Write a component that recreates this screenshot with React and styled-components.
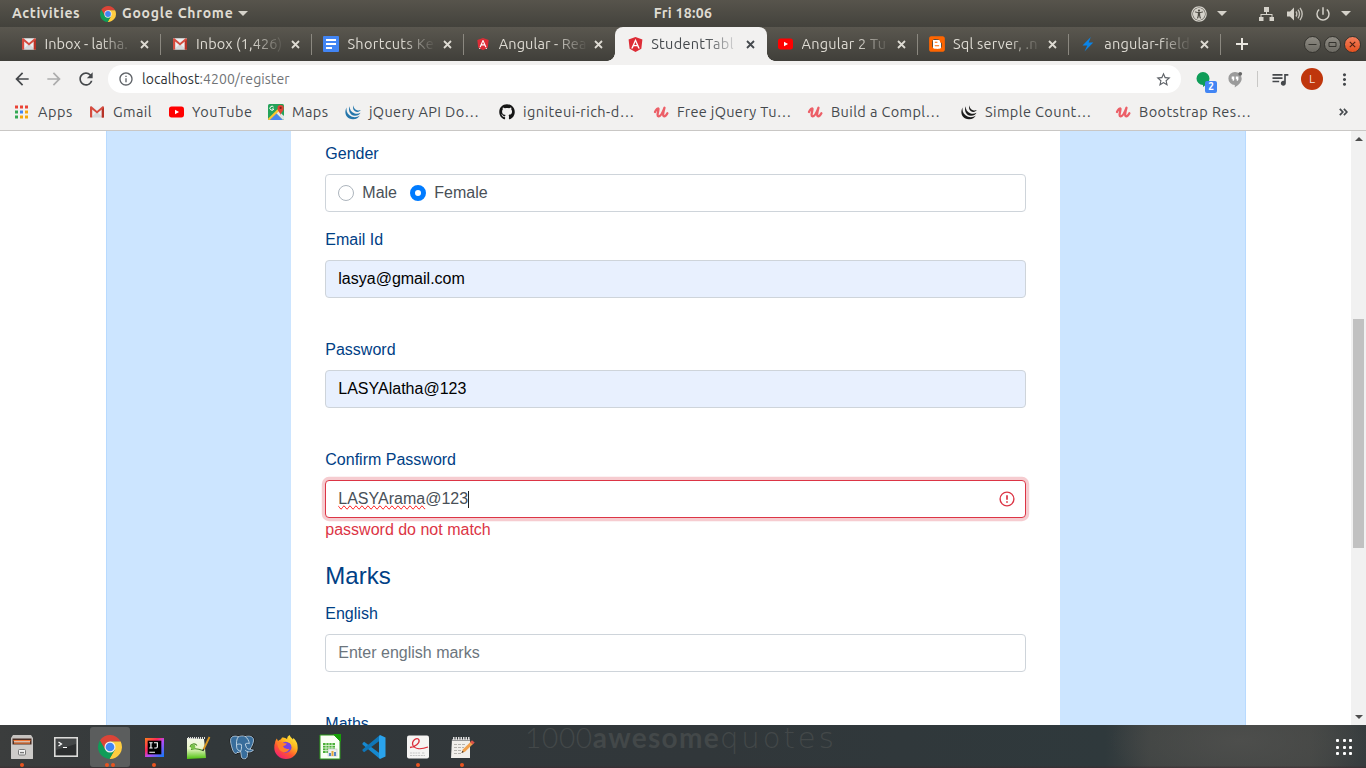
import React from "react";
import styled, { createGlobalStyle, css } from "styled-components";
import { FaAngular, FaBlogger, FaGithub, FaUniversalAccess } from "react-icons/fa";
import {
  MdArrowBack,
  MdArrowForward,
  MdInfoOutline,
  MdMoreVert,
  MdPowerSettingsNew,
  MdQueueMusic,
  MdRefresh,
  MdStarBorder,
} from "react-icons/md";

const uiFont = `"Ubuntu", "Noto Sans", sans-serif`;

const GlobalStyle = createGlobalStyle`
  *, *::before, *::after { box-sizing: border-box; }
  body { margin: 0; overflow: hidden; font-family: "Liberation Sans", Arial, sans-serif; }
  svg { display: block; flex: none; }
`;

const Desktop = styled.div`
  width: 1366px;
  height: 768px;
  display: flex;
  flex-direction: column;
  overflow: hidden;
  background: #fff;
`;

/* ---------- system bar ---------- */

const SystemBar = styled.header`
  flex: none;
  height: 27px;
  display: grid;
  grid-template-columns: 1fr auto 1fr;
  align-items: center;
  background: linear-gradient(#57544c, #43423c);
  color: #dfdbd2;
  font: 700 14px/27px ${uiFont};
`;

const SystemLeft = styled.div`
  display: flex;
  align-items: center;
  padding-left: 12px;
`;

const BarText = styled.span`
  white-space: nowrap;
  width: ${(p) => p.$width}px;
  letter-spacing: ${(p) => p.$track || 0}px;
  margin-right: ${(p) => p.$after || 0}px;
`;

const Clock = styled.span`
  white-space: nowrap;
  letter-spacing: 0.3px;
`;

const SystemRight = styled.div`
  display: flex;
  align-items: center;
  justify-content: flex-end;
  padding-right: 15px;
`;

const TrayItem = styled.span`
  display: flex;
  margin-left: ${(p) => p.$before}px;
`;

const Caret = styled.i`
  border: 5px solid transparent;
  border-top-color: #d5d2ca;
  border-bottom: 0;
  margin-left: ${(p) => p.$before || 0}px;
`;

/* ---------- tab strip ---------- */

const TabStrip = styled.nav`
  flex: none;
  height: 34px;
  display: flex;
  padding-left: 9.6px;
  background: linear-gradient(#5a574f, #403f3a);
`;

const TabBox = styled.div`
  position: relative;
  width: 151.4px;
  height: 34px;
  display: flex;
  align-items: center;
  padding-left: 11px;
  color: #dedbd3;
  font: 400 14.5px/34px ${uiFont};

  ${(p) =>
    p.$divider &&
    css`
      &::after {
        content: "";
        position: absolute;
        right: 0;
        top: 7px;
        width: 1px;
        height: 21px;
        background: #8b8880;
      }
    `}

  ${(p) =>
    p.$active &&
    css`
      padding-left: 12px;
      color: #45494d;
      background: #f2f1f0;
      border-radius: 8px 8px 0 0;
      &::before,
      &::after {
        content: "";
        position: absolute;
        bottom: 0;
        width: 8px;
        height: 8px;
      }
      &::before {
        left: -8px;
        background: radial-gradient(circle at 0 0, transparent 7.5px, #f2f1f0 8px);
      }
      &::after {
        right: -8px;
        background: radial-gradient(circle at 100% 0, transparent 7.5px, #f2f1f0 8px);
      }
    `}
`;

const TabTitle = styled.span`
  width: 87.3px;
  margin: 0 8px 0 8px;
  white-space: nowrap;
  letter-spacing: ${(p) => p.$track || 0}px;
  mask-image: linear-gradient(90deg, #000 55px, transparent 89px);
`;

const IconSlot = styled.span`
  width: 16px;
  height: 16px;
  flex: none;
  display: flex;
  align-items: center;
  justify-content: center;
`;

const Backed = styled.span`
  display: flex;
  background: linear-gradient(#fff, #fff) center / 8px 9px no-repeat;
`;

const NewTab = styled.div`
  width: 43px;
  display: flex;
  align-items: center;
  justify-content: center;
`;

const WindowButtons = styled.div`
  display: flex;
  align-items: center;
  gap: 3px;
  margin-left: 40.5px;
`;

const WindowButton = styled.span`
  width: 17px;
  height: 17px;
  border-radius: 50%;
  border: 1px solid #35342f;
  display: flex;
  align-items: center;
  justify-content: center;
  background: ${(p) =>
    p.$close ? "linear-gradient(#f37f5c, #e4511f)" : "linear-gradient(#8e8b83, #6d6b64)"};
`;

/* ---------- toolbar ---------- */

const Toolbar = styled.div`
  flex: none;
  height: 36px;
  display: flex;
  align-items: center;
  padding-left: 12px;
  background: #f2f1f0;
  color: #45484b;
`;

const NavButton = styled.span`
  display: flex;
  width: 32px;
  color: ${(p) => (p.$off ? "#adadad" : "#45484b")};
`;

const Omnibox = styled.div`
  width: 1073px;
  height: 28px;
  border-radius: 14px;
  background: #fff;
  display: flex;
  align-items: center;
  padding: 0 9.5px 0 10px;
  color: #5f6368;
  font: 400 14px/28px ${uiFont};
`;

const Address = styled.span`
  flex: 1;
  margin-left: 8px;
  letter-spacing: 0.06px;
  color: #707376;
  b {
    font-weight: 400;
    color: #2e3134;
  }
`;

const Extension = styled.span`
  position: relative;
  display: flex;
  margin-left: ${(p) => p.$before}px;
`;

const CountBadge = styled.span`
  position: absolute;
  left: 10px;
  top: 11px;
  width: 12px;
  height: 12px;
  border-radius: 2px;
  background: #4285f4;
  color: #fff;
  font: 700 10px/12px ${uiFont};
  text-align: center;
`;

const ToolbarRule = styled.i`
  width: 1px;
  height: 16px;
  margin-left: 14px;
  background: #c9c8c6;
`;

const Avatar = styled.span`
  width: 22px;
  height: 22px;
  margin-left: 11px;
  border-radius: 50%;
  background: #bf360c;
  color: #f3ded7;
  font: 400 12px/22px ${uiFont};
  text-align: center;
`;

/* ---------- bookmarks ---------- */

const BookmarkBar = styled.div`
  flex: none;
  height: 34px;
  display: flex;
  padding: 0 0 4px 14px;
  background: #f2f1f0;
  border-bottom: 1px solid #c9c7c5;
  color: #45494d;
  font: 400 14.5px/29px ${uiFont};
`;

const BookmarkItem = styled.span`
  display: flex;
  align-items: center;
  margin-right: 16px;
`;

const BookmarkLabel = styled.span`
  width: ${(p) => p.$width}px;
  margin-left: 8px;
  white-space: nowrap;
  letter-spacing: ${(p) => p.$track || 0}px;
`;

const OverflowMark = styled.span`
  display: flex;
  align-items: center;
  margin-left: 70px;
`;

/* ---------- page ---------- */

const Viewport = styled.main`
  flex: 1;
  min-height: 0;
  display: flex;
  overflow: hidden;
`;

const Page = styled.div`
  width: 1351px;
  padding-left: 105.5px;
  overflow: hidden;
`;

const Panel = styled.div`
  width: 1140px;
  padding: 0 184.3px;
  background: #cce5ff;
  border: solid #b8daff;
  border-width: 0 1px;
`;

const Form = styled.form`
  width: 769.4px;
  padding: 11px 34.5px 0;
  background: #fff;
  color: #004085;
  font-size: 16px;
  line-height: 24px;
`;

const Group = styled.div`
  height: ${(p) => p.$height}px;
`;

const Label = styled.label`
  display: block;
  margin-bottom: 8px;
`;

const Field = styled.div`
  height: 38px;
  display: flex;
  align-items: center;
  padding: 0 10px 0 12px;
  border: 1px solid #ced4da;
  border-radius: 4px;
  background: ${(p) => (p.$filled ? "#e8f0fe" : "#fff")};
  color: ${(p) => (p.$filled ? "#000" : "#495057")};
  ${(p) =>
    p.$invalid &&
    css`
      justify-content: space-between;
      border-color: #dc3545;
      box-shadow: 0 0 0 3.2px rgba(220, 53, 69, 0.25);
    `}
`;

const Placeholder = styled.span`
  color: #6c757d;
`;

const Typed = styled.span`
  display: flex;
  align-items: center;
`;

const Misspelled = styled.span`
  text-decoration-line: spelling-error;
`;

const TextCursor = styled.i`
  width: 1px;
  height: 17px;
  background: #222;
`;

const Radio = styled.span`
  width: 16px;
  height: 16px;
  margin-right: 8px;
  border-radius: 50%;
  background: #fff;
  border: ${(p) => (p.$on ? "5px solid #007bff" : "1px solid #adb5bd")};
`;

const RadioText = styled.span`
  width: 48px;
`;

const ErrorText = styled.div`
  color: #dc3545;
`;

const Heading = styled.h4`
  margin: 0 0 12px;
  font-size: 24px;
  font-weight: 400;
  line-height: 28px;
`;

const ScrollTrack = styled.div`
  width: 15px;
  display: flex;
  flex-direction: column;
  align-items: center;
  justify-content: space-between;
  padding: 6px 0 6px;
  background: #f1f1f1;
`;

const ScrollArrow = styled.i`
  border: 4px solid transparent;
  ${(p) =>
    p.$up
      ? "border-bottom-color: #4d4d4d; border-top: 0;"
      : "border-top-color: #4d4d4d; border-bottom: 0;"}
`;

const ScrollThumb = styled.i`
  width: 11px;
  height: 229px;
  margin-bottom: -10px;
  background: #c1c1c1;
`;

/* ---------- dock ---------- */

const Dock = styled.footer`
  flex: none;
  height: 43px;
  display: flex;
  align-items: flex-start;
  background:
    linear-gradient(transparent 41px, rgba(60, 40, 45, 0.45) 42px),
    radial-gradient(ellipse 130px 50px at 1240px 16px, #4d4e4c 0%, rgba(77, 78, 76, 0) 100%),
    linear-gradient(90deg, #3b3d3d 0, #32383a 180px, #31373a 700px, #2f393c 1105px, #404443 1150px, #444644 1310px, #363c3e 1366px);
`;

const DockItem = styled.span`
  position: relative;
  width: 40px;
  height: 40px;
  margin: 2px 2px 0;
  display: flex;
  align-items: center;
  justify-content: center;
  border-radius: 3px;
  background: ${(p) => (p.$active ? "#5b5d5d" : "transparent")};
`;

const RunningDots = styled.span`
  position: absolute;
  bottom: 0;
  left: 0;
  width: 40px;
  display: flex;
  justify-content: center;
  gap: 1.5px;
  i {
    width: 4px;
    height: 4px;
    border-radius: 50%;
    background: #e95420;
  }
`;

const WallpaperText = styled.span`
  flex: 1;
  height: 40px;
  margin-left: 41px;
  color: #434849;
  font: 300 28px/25px Lato, sans-serif;
  letter-spacing: 0.7px;
  white-space: nowrap;
  b {
    font-weight: 700;
    letter-spacing: 1.3px;
  }
`;

const WideWord = styled.span`
  font: 200 29px/25px "DejaVu Sans", sans-serif;
  letter-spacing: 3px;
`;

const DockRow = styled.div`
  display: flex;
`;

const LauncherGrid = styled.span`
  display: grid;
  grid-template-columns: repeat(3, 3px);
  gap: 3.5px;
  margin: 14px 14px 0 0;
  i {
    width: 3px;
    height: 3px;
    border-radius: 1px;
    background: #fff;
  }
`;

/* ---------- drawings ---------- */

const ChromeIcon = ({ size }) => (
  <svg width={size} height={size} viewBox="0 0 48 48">
    <path fill="#db4437" d="M3.81 11.03A24 24 0 0 1 45.33 13H24L14.47 29.5Z" />
    <path fill="#ffcd40" d="M45.33 13A24 24 0 0 1 22.86 47.97L33.53 29.5L24 13Z" />
    <path fill="#0f9d58" d="M3.81 11.03A24 24 0 0 0 22.86 47.97L33.53 29.5H14.47Z" />
    <circle cx="24" cy="24" r="11" fill="#f1f1f1" />
    <circle cx="24" cy="24" r="8.7" fill="#4285f4" />
  </svg>
);

const VolumeIcon = () => (
  <svg width="18" height="16" viewBox="0 0 18 16">
    <path d="M1 5.500h3L8 1.500v13L4 10.500H1Z" fill="#d5d2ca" />
    <path d="M10 5.500q1.600 2.500 0 5M12 3.700q3 4.300 0 8.600M14 1.900q4.400 6.100 0 12.200" fill="none" stroke="#c2bfb7" strokeWidth="1.400" />
  </svg>
);

const GmailIcon = () => (
  <svg width="16" height="16" viewBox="0 0 16 16">
    <rect x="1" y="2.2" width="14" height="11.4" rx="1" fill="#eceff1" />
    <path d="M3 12.5L8 8l5 4.5v1H3Z" fill="#d5d9db" />
    <path d="M1 3.2v9.5q0 .9.9.9h1.3V5.5L8 9.6l4.8-4.1v8.1h1.3q.9 0 .9-.9V3.2Q15 2 13.5 2.3L8 7 2.5 2.3Q1 2 1 3.2Z" fill="#d54c3f" />
    <path d="M12.8 5.5 15 3.6v9.1q0 .9-.9.9h-1.3Z" fill="#b63327" />
  </svg>
);

const DocsIcon = () => (
  <svg width="16" height="16" viewBox="0 0 16 16">
    <rect width="16" height="16" rx="1" fill="#4285f4" />
    <path d="M3 4h10M3 8h10M3 12h6" stroke="#fff" strokeWidth="1.8" />
  </svg>
);

const AngularIcon = ({ size }) => (
  <Backed>
    <FaAngular size={size} color="#dd2c36" />
  </Backed>
);

const YoutubeIcon = () => (
  <svg width="15" height="12" viewBox="0 0 15 12">
    <rect y=".6" width="15" height="10.8" rx="2.6" fill="#f00" />
    <path d="m6 3.8 4 2.2-4 2.2Z" fill="#fff" />
  </svg>
);

const BloggerIcon = () => (
  <Backed>
    <FaBlogger size={18} color="#ff6500" />
  </Backed>
);

const BoltIcon = () => (
  <svg width="16" height="16" viewBox="0 0 16 16">
    <path d="M10.8 1 2.5 9.6h4.8L4.5 15.5 13.3 6.6H8.7Z" fill="#0a84e8" />
  </svg>
);

const AppsIcon = () => (
  <svg width="16" height="16" viewBox="0 0 16 16">
    {["#ea4335", "#ea4335", "#ea4335", "#34a853", "#4285f4", "#f6a80c", "#34a853", "#f6a80c", "#f6a80c"].map((c, i) => (
      <rect key={i} x={1 + (i % 3) * 5} y={1.5 + Math.floor(i / 3) * 5} width="3" height="3" fill={c} />
    ))}
  </svg>
);

const MapsIcon = () => (
  <svg width="16" height="16" viewBox="0 0 16 16">
    <rect width="16" height="16" rx="1.5" fill="#25a35a" />
    <path d="M1 16 8 9l7 7Z" fill="#4a86ee" />
    <path d="m8 9 2.2-2.2L16 12v3l-1 1Z" fill="#e6e6e6" />
    <path d="M0 14.8 9.5 5.2 11 7l-9.2 9H1Q0 16 0 14.8Z" fill="#fbc62f" />
    <path d="M5.6 3.1A2 2 0 1 0 5.8 5H4" fill="none" stroke="#fff" strokeWidth="1" />
    <path d="M12.5 11.5c0-3-3-4-3-7.5a3 3 0 0 1 6.2 0c0 3.5-3.2 4.5-3.2 7.5Z" fill="#e24436" />
    <circle cx="12.6" cy="3.9" r="1.1" fill="#7d2018" />
  </svg>
);

const JqueryIcon = ({ color }) => (
  <svg width="16" height="16" viewBox="0 0 16 16" fill={color}>
    <path d="M1.6 3.4C-.8 7.5-.2 15 8 15.2c3.4 0 5.600-1.600 6.800-3.700-2 1.500-5 2.200-7.800 1.200C2.600 11 1 7.500 1.600 3.400Z" />
    <path d="M4.700 2.200C3 6 4.500 11.400 10 11.700c2.700 0 4.600-1.300 5.500-3-1.600 1-3.800 1.400-5.800.7C6.300 8.200 4.500 5.500 4.700 2.200Z" />
    <path d="M8.300 1.200C7.300 4.200 8.800 7.700 12.300 8c1.700 0 2.800-.8 3.400-1.900-1.200.5-2.500.6-3.700.1C9.700 5.300 8.400 3.500 8.300 1.200Z" />
  </svg>
);

const UdemyIcon = () => (
  <svg width="16" height="16" viewBox="0 0 16 16" fill="none" stroke="#ec5f67" strokeLinecap="round" strokeLinejoin="round">
    <path d="M2 8C3 5.700 4.900 3.800 5.500 4.800 5.800 6.700 3.200 12 5.600 12.400 8.200 12.600 10.200 7 11.500 3.800 10.700 6.700 9.100 12 11.200 12.300c1.500 0 2.500-1.600 3.200-3" strokeWidth="2.3" />
  </svg>
);

const NetworkIcon = () => (
  <svg width="17" height="16" viewBox="0 0 17 16" fill="#d5d2ca">
    <path d="M6 1h5v5H6ZM1 11h4.5v4H1ZM11.5 11H16v4h-4.5ZM8 6h1v2h5.5v3h-1V9H3.5v2h-1V8H8Z" />
  </svg>
);

const HangoutsIcon = () => (
  <svg width="15" height="17" viewBox="0 0 15 17">
    <path d="M7 1a6.5 6.5 0 0 0-.2 13v2.4C10 14.8 13.7 11.5 13.7 7.6A6.6 6.6 0 0 0 7 1Z" fill="#9b9b9b" />
    <path d="M3.700 5.500h2.600v3q0 1.300-1.600 1.500V8.200h-1ZM7.800 5.500h2.600v3q0 1.300-1.600 1.500V8.200h-1Z" fill="#fff" />
    <circle cx="12.2" cy="2.8" r="1.9" fill="#666" />
  </svg>
);

const AlertIcon = () => (
  <svg width="16" height="16" viewBox="0 0 16 16" fill="none" stroke="#dc3545">
    <circle cx="8" cy="8" r="6.9" strokeWidth="1.4" />
    <path d="M8 4.200v4.600M8 10.300v1.500" strokeWidth="1.7" />
  </svg>
);

const FilesIcon = () => (
  <svg width="24" height="24" viewBox="0 0 24 24">
    <path d="M3 0h18l2 3v20q0 1-1 1H2q-1 0-1-1V3Z" fill="#c6c3c0" />
    <rect x="2.5" y="3.5" width="19" height="6.5" fill="#4a2e24" />
    <path d="M3.500 5h17v1.300h-17Z" fill="#ee7433" />
    <path d="M4 6.300h16v1.200H4Z" fill="#fff2e8" />
    <path d="M4 7.500h16v1.200H4Z" fill="#e8763a" />
    <path d="M1 9.500h22V23q0 1-1 1H2q-1 0-1-1Z" fill="#cdcbc9" />
    <rect x="8.5" y="14.5" width="7" height="5.5" rx="1" fill="#f2f2f2" stroke="#777" />
    <path d="M10 17.600h4" stroke="#777" strokeWidth="1.4" />
  </svg>
);

const TerminalIcon = () => (
  <svg width="24" height="20" viewBox="0 0 24 20">
    <rect x=".8" y=".8" width="22.4" height="18.4" fill="#2c2e2f" stroke="#dcdcda" strokeWidth="1.6" />
    <path d="M2 2h20v5L2 13Z" fill="#434647" />
    <path d="m4.500 5 3 2-3 2M9 10.500h4" fill="none" stroke="#fff" strokeWidth="1.2" />
  </svg>
);

const IdeaIcon = () => (
  <svg width="19" height="19" viewBox="0 0 20 20">
    <defs>
      <linearGradient id="idea" x1="0" y1="0" x2="1" y2="1">
        <stop offset="0" stopColor="#fc801d" />
        <stop offset=".35" stopColor="#fe2857" />
        <stop offset=".55" stopColor="#b74af7" />
        <stop offset="1" stopColor="#087cfa" />
      </linearGradient>
    </defs>
    <rect width="20" height="20" fill="url(#idea)" />
    <rect x="2.8" y="2.8" width="14.4" height="14.4" fill="#000" />
    <path d="M4.500 5H8M6.250 5v5.500M4.500 10.500H8M9.500 5h3.500v4.300q0 1.200-1.200 1.200h-2M4.500 15h6" fill="none" stroke="#fff" strokeWidth="1.2" />
  </svg>
);

const NotepadIcon = () => (
  <svg width="25" height="25" viewBox="0 0 25 25">
    <defs>
      <linearGradient id="npp" x1="0" y1="0" x2="0" y2="1">
        <stop offset="0" stopColor="#f4f7ea" />
        <stop offset=".5" stopColor="#eaf5c8" />
        <stop offset="1" stopColor="#4fc30f" />
      </linearGradient>
    </defs>
    <path d="m1 3 17 1 2 19-19 1Z" fill="url(#npp)" />
    <path d="M2 3h17" stroke="#ddd" strokeWidth="2" strokeDasharray="1 1" />
    <path d="M4 12c1-3.500 5-4 7-1.500M5 14.500c4-1.500 8-.5 12 1" fill="none" stroke="#44891f" strokeWidth="1.1" />
    <circle cx="7" cy="12" r="2.4" fill="#7bc34a" />
    <path d="m17.500 14.500 6-12.500" stroke="#d9961f" strokeWidth="1.8" />
    <path d="m16.800 16 .9-2" stroke="#333" strokeWidth="1.4" />
  </svg>
);

const elephantOutline =
  "M8.500 17.500C6.500 19.500 5 18.500 3.700 15 2.200 11 1 6 1.800 3.600 3 .8 6.500.6 9.300 1.700 11 .8 14.500.5 16.300 1.500 19 .6 23 .8 24.300 3.500c.9 3-1 7.500-3.200 10.600 1.500 1 3 .6 3.400.8-.8 1.900-3.600 2.500-5.700 1.900-.5 2 .2 5.500-1.800 6.700-1.500.7-4 .4-4.600-1.400-.6-2-.2-4.200-.8-5.800-1.200 1.300-2.200 1.500-3.100 1.200Z";

const PostgresIcon = () => (
  <svg width="26" height="25" viewBox="0 0 26 25" strokeLinecap="round" strokeLinejoin="round">
    <path d={elephantOutline} fill="#386d9b" stroke="#111" strokeWidth="1.8" />
    <path d={elephantOutline} fill="#386d9b" stroke="#c9dbe8" strokeWidth=".8" />
    <path
      d="M9.300 1.700C7 4.500 7.500 8 7.700 12.200c.1 2 1.700 3.600 3.900 4.100 1-2 1.200-4.300.7-6.800C10.600 8.700 9 9 7.600 9.800M16.300 1.500c2.400 1.800 3.700 4.300 4 7.200-1.500-.8-3-.5-4 .3.800 2.700 1.200 6 4.800 5.100M16.500 15.500c.8.700 1.500 1.100 2.300 1.300"
      fill="none"
      stroke="#c9dbe8"
      strokeWidth=".9"
    />
  </svg>
);

const FirefoxIcon = () => (
  <svg width="24" height="24" viewBox="0 0 24 24">
    <defs>
      <linearGradient id="fox" x1=".85" y1="0" x2=".2" y2="1">
        <stop offset="0" stopColor="#fff044" />
        <stop offset=".35" stopColor="#ffb61e" />
        <stop offset=".65" stopColor="#ff5630" />
        <stop offset="1" stopColor="#f0187c" />
      </linearGradient>
    </defs>
    <path d="M1 8c.3-2 .9-3.300 1.800-4.500L4 6q1.400-1.300 3-1.800L8 2.500Q11 2 13 4 13 1.500 15.500 0q1 2.500 3.500 4.500 0-1 .5-1.500 4.300 4 4.200 10A11.700 11 0 0 1 .3 13Q0 10 1 8Z" fill="url(#fox)" />
    <circle cx="12" cy="12.2" r="5.5" fill="#7542e5" />
    <path d="M3 8q3-2 6 0l4 .6q-1 2.300-4 2.600 1.800 4 6.500 2.500-2 4-6 3.500-5-.7-6.500-9.200Z" fill="#ff7f2a" />
    <path d="M11 5q7-1 7.500 7-1.500-4.500-5.500-5Z" fill="#ffc52e" />
  </svg>
);

const CalcIcon = () => (
  <svg width="22" height="26" viewBox="0 0 22 26">
    <path d="M1 1h14l6 6v18H1Z" fill="#fafff5" stroke="#2c9c1a" />
    <path d="M14 0h8v8Z" fill="#16a008" />
    <rect x="4" y="9" width="12" height="10" fill="#4caf3a" />
    <path d="M4 11.500h12M4 14h12M4 16.500h12M7 9v10M10 9v10M13 9v10" stroke="#d8f3cd" strokeWidth=".9" />
    <rect x="9" y="15" width="9" height="7" fill="#eef1ee" stroke="#bbb" strokeWidth=".5" />
    <path d="M10 22v-3h2v3ZM15 22v-4h2v4Z" fill="#5685c5" />
    <path d="M12.500 22v-5h2v5Z" fill="#e4a83a" />
  </svg>
);

const CodeIcon = () => (
  <svg width="24" height="24" viewBox="0 0 24 24">
    <path d="m.5 8.200 1.600-1.500L18 18.500V24L.5 9.500Z" fill="#1689d0" />
    <path d="m.5 15.800 1.600 1.500L18 5.500V0L.5 14.500Z" fill="#0f76b8" />
    <path d="m18 0 5.500 2.500v19L18 24l-1-1.500v-21Z" fill="#2aa3ec" />
  </svg>
);

const ScribbleIcon = () => (
  <svg width="24" height="24" viewBox="0 0 24 24">
    <rect x="1" y=".5" width="22" height="23" rx="2" fill="#f5f4f3" />
    <path d="M4 12.500C9 12 14 8 13 5 11.500 1 5 6 7 10.500c2 3.500 8 4 15 1.500" fill="none" stroke="#dc2d3a" strokeWidth="1.3" />
    <path d="M4 18h10M4 20.500h15M16 18h3" stroke="#c5c5c5" strokeWidth="1" strokeDasharray="2 .7" />
  </svg>
);

const EditorIcon = () => (
  <svg width="25" height="23" viewBox="0 0 25 23">
    <path d="M2 3h18v19H1Z" fill="#f1efeb" />
    <path d="M2 3h18v2H2Z" fill="#999" />
    <path d="M3 2.500h17" stroke="#ddd" strokeWidth="3" strokeDasharray="1.5 1" />
    <path d="M4 8.500h12M4 11.500h10M4 14.500h8M4 17.500h7" stroke="#b5b3ae" strokeDasharray="3 1" />
    <path d="m11.500 17 1.300-3.500L21 5.500l2.500 2-8.500 8.300Z" fill="#f0a04c" />
    <path d="m20 6.300 2-2 2.700 2.200-2 2.100Z" fill="#dc5349" />
    <path d="m11.500 17 1-2.200 1.300 1.200Z" fill="#333" />
  </svg>
);

const CloseMark = ({ color }) => (
  <svg width="9" height="9" viewBox="0 0 9 9">
    <path d="m1 1 7 7M8 1 1 8" stroke={color} strokeWidth="1.8" />
  </svg>
);

const ChevronsIcon = () => (
  <svg width="9" height="8" viewBox="0 0 9 8" fill="none" stroke="#45494d" strokeWidth="1.7">
    <path d="m.8.800 3 3.200-3 3.200M4.900.8l3 3.200-3 3.200" />
  </svg>
);

/* ---------- content ---------- */

const tabs = [
  { icon: <GmailIcon />, title: "Inbox - latha.", divider: true },
  { icon: <GmailIcon />, title: "Inbox (1,426)", divider: true, track: 0.1 },
  { icon: <DocsIcon />, title: "Shortcuts Ke", divider: true, track: 0.35 },
  { icon: <AngularIcon size={14} />, title: "Angular - Rea", track: 0.1 },
  { icon: <AngularIcon size={17} />, title: "StudentTabl", active: true, track: 0.3 },
  { icon: <YoutubeIcon />, title: "Angular 2 Tu", divider: true, track: 0.25 },
  { icon: <BloggerIcon />, title: "Sql server, .n", divider: true, track: 0.2 },
  { icon: <BoltIcon />, title: "angular-field", divider: true, track: 0.2 },
];

const bookmarks = [
  { icon: <AppsIcon />, label: "Apps", width: 35, track: 0.55 },
  { icon: <GmailIcon />, label: "Gmail", width: 39, track: 0.4 },
  { icon: <YoutubeIcon />, label: "YouTube", width: 60, track: 0.5 },
  { icon: <MapsIcon />, label: "Maps", width: 37, track: 0.4 },
  { icon: <JqueryIcon color="#2476ab" />, label: "jQuery API Do…", width: 114, track: 0.34 },
  { icon: <FaGithub size={16} color="#161616" />, label: "igniteui-rich-d…", width: 114, track: 0.44 },
  { icon: <UdemyIcon />, label: "Free jQuery Tu…", width: 114, track: 0.32 },
  { icon: <UdemyIcon />, label: "Build a Compl…", width: 114, track: 0.38 },
  { icon: <JqueryIcon color="#1b1b1b" />, label: "Simple Count…", width: 114, track: 0.4 },
  { icon: <UdemyIcon />, label: "Bootstrap Res…", width: 114, track: 0.43 },
];

const dockApps = [
  { icon: <FilesIcon />, running: 1 },
  { icon: <TerminalIcon />, running: 0 },
  { icon: <ChromeIcon size={24} />, running: 2, active: true },
  { icon: <IdeaIcon />, running: 1 },
  { icon: <NotepadIcon />, running: 0 },
  { icon: <PostgresIcon />, running: 0 },
  { icon: <FirefoxIcon />, running: 0 },
  { icon: <CalcIcon />, running: 0 },
  { icon: <CodeIcon />, running: 0 },
  { icon: <ScribbleIcon />, running: 1 },
  { icon: <EditorIcon />, running: 1 },
];

export default function App() {
  return (
    <Desktop>
      <GlobalStyle />
      <SystemBar>
        <SystemLeft>
          <BarText $width={68} $after={20} $track={0.6}>Activities</BarText>
          <ChromeIcon size={16} />
          <TrayItem $before={6}>
            <BarText $width={116} $track={0.75}>Google Chrome</BarText>
          </TrayItem>
          <Caret />
        </SystemLeft>
        <Clock>Fri 18:06</Clock>
        <SystemRight>
          <FaUniversalAccess size={16} color="#d5d2ca" />
          <Caret $before={10} />
          <TrayItem $before={31}><NetworkIcon /></TrayItem>
          <TrayItem $before={11}><VolumeIcon /></TrayItem>
          <TrayItem $before={10}><MdPowerSettingsNew size={18} color="#d5d2ca" /></TrayItem>
          <Caret $before={9} />
        </SystemRight>
      </SystemBar>

      <TabStrip>
        {tabs.map((t) => (
          <TabBox key={t.title} $active={t.active} $divider={t.divider}>
            <IconSlot>{t.icon}</IconSlot>
            <TabTitle $track={t.track}>{t.title}</TabTitle>
            <CloseMark color={t.active ? "#45494d" : "#dedbd3"} />
          </TabBox>
        ))}
        <NewTab>
          <svg width="12" height="12" viewBox="0 0 12 12">
            <path d="M6 0v12M0 6h12" stroke="#eae7e0" strokeWidth="2" />
          </svg>
        </NewTab>
        <WindowButtons>
          <WindowButton>
            <svg width="9" height="9" viewBox="0 0 9 9"><path d="M.5 4.500h8" stroke="#35342f" /></svg>
          </WindowButton>
          <WindowButton>
            <svg width="9" height="9" viewBox="0 0 9 9"><path d="M1 2.500h7v4H1Z" fill="none" stroke="#35342f" /></svg>
          </WindowButton>
          <WindowButton $close>
            <svg width="7" height="7" viewBox="0 0 9 9"><path d="m1 1 7 7M8 1 1 8" stroke="#4b2012" strokeWidth="1.4" /></svg>
          </WindowButton>
        </WindowButtons>
      </TabStrip>

      <Toolbar>
        <NavButton><MdArrowBack size={20} /></NavButton>
        <NavButton $off><MdArrowForward size={20} /></NavButton>
        <NavButton><MdRefresh size={20} /></NavButton>
        <Omnibox>
          <MdInfoOutline size={16} />
          <Address><b>localhost</b>:4200/register</Address>
          <MdStarBorder size={17} />
        </Omnibox>
        <Extension $before={14}>
          <svg width="16" height="18" viewBox="0 0 16 18">
            <path d="M8 2a6.500 6.500 0 0 0 0 13v2q6.500-4 6.500-8.500A6.500 6.500 0 0 0 8 2Z" fill="#0f9d58" />
          </svg>
          <CountBadge>2</CountBadge>
        </Extension>
        <Extension $before={17}><HangoutsIcon /></Extension>
        <ToolbarRule />
        <Extension $before={12}><MdQueueMusic size={20} /></Extension>
        <Avatar>L</Avatar>
        <Extension $before={12}><MdMoreVert size={19} /></Extension>
      </Toolbar>

      <BookmarkBar>
        {bookmarks.map((b) => (
          <BookmarkItem key={b.label}>
            <IconSlot>{b.icon}</IconSlot>
            <BookmarkLabel $width={b.width} $track={b.track}>{b.label}</BookmarkLabel>
          </BookmarkItem>
        ))}
        <OverflowMark><ChevronsIcon /></OverflowMark>
      </BookmarkBar>

      <Viewport>
        <Page>
          <Panel>
            <Form>
              <Group $height={86}>
                <Label>Gender</Label>
                <Field>
                  <Radio />
                  <RadioText>Male</RadioText>
                  <Radio $on />
                  <span>Female</span>
                </Field>
              </Group>
              <Group $height={110}>
                <Label>Email Id</Label>
                <Field $filled>lasya@gmail.com</Field>
              </Group>
              <Group $height={110}>
                <Label>Password</Label>
                <Field $filled>LASYAlatha@123</Field>
              </Group>
              <Group $height={114}>
                <Label>Confirm Password</Label>
                <Field $invalid>
                  <Typed>
                    <Misspelled>LASYArama</Misspelled>@123
                    <TextCursor />
                  </Typed>
                  <AlertIcon />
                </Field>
                <ErrorText>password do not match</ErrorText>
              </Group>
              <Heading>Marks</Heading>
              <Group $height={110}>
                <Label>English</Label>
                <Field><Placeholder>Enter english marks</Placeholder></Field>
              </Group>
              <Group $height={110}>
                <Label>Maths</Label>
              </Group>
            </Form>
          </Panel>
        </Page>
        <ScrollTrack>
          <ScrollArrow $up />
          <ScrollThumb />
          <ScrollArrow />
        </ScrollTrack>
      </Viewport>

      <Dock>
        <DockRow>
          {dockApps.map((a, i) => (
            <DockItem key={i} $active={a.active}>
              {a.icon}
              {a.running > 0 && (
                <RunningDots>
                  {Array.from({ length: a.running }, (_, d) => <i key={d} />)}
                </RunningDots>
              )}
            </DockItem>
          ))}
        </DockRow>
        <WallpaperText>1000<b>awesome</b><WideWord>quotes</WideWord></WallpaperText>
        <LauncherGrid>
          {Array.from({ length: 9 }, (_, d) => <i key={d} />)}
        </LauncherGrid>
      </Dock>
    </Desktop>
  );
}
